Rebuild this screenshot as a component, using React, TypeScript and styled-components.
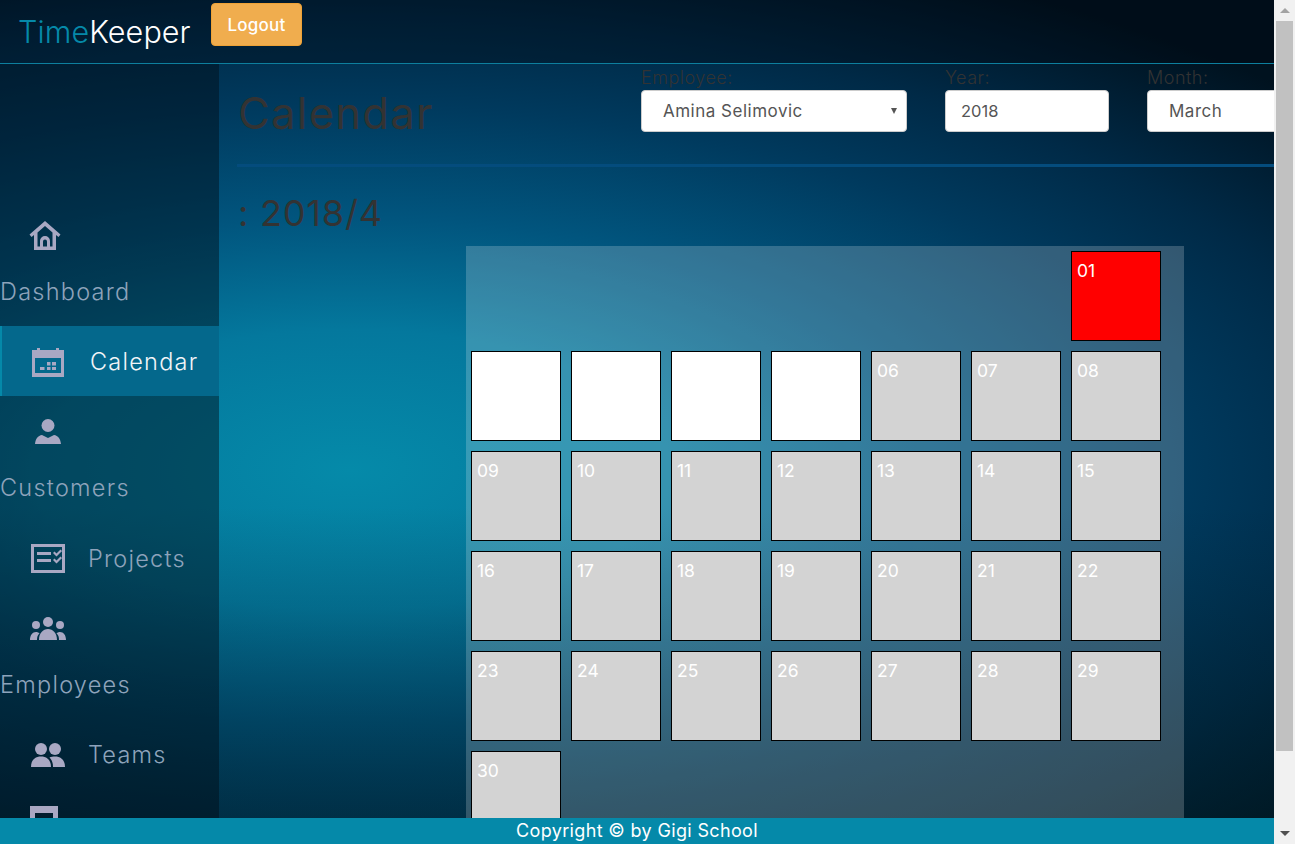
import React from 'react';
import styled, { createGlobalStyle } from 'styled-components';

const GlobalStyle = createGlobalStyle`
  html, body {
    height: 100%;
  }
  body {
    margin: 0;
    font-family: "Inter", "Open Sans", sans-serif;
    overflow: hidden;
  }
  * {
    box-sizing: border-box;
  }
`;

const Shell = styled.div`
  display: flex;
  height: 100vh;
`;

const Page = styled.div`
  flex: 1;
  min-width: 0;
  display: flex;
  flex-direction: column;
  background-color: #00121f;
  background-image: linear-gradient(to bottom, transparent 60%, rgba(0, 28, 34, 0.48) 100%),
    radial-gradient(ellipse 1280px 560px at 350px 470px, #058aa9 0%, #04789d 25%, #01557e 45%, #003a5e 65%, #002a47 80%, #00121f 100%);
`;

const Content = styled.div`
  flex: 1;
  min-height: 0;
  overflow: hidden;
`;

const ScrollRail = styled.aside`
  flex: 0 0 21px;
  display: flex;
  flex-direction: column;
  background: #f1f1f1;
`;

const RailArrow = styled.div<{ $down?: boolean }>`
  flex: 0 0 21px;
  display: flex;
  align-items: center;
  justify-content: center;
  &::before {
    content: '';
    border-left: 5px solid transparent;
    border-right: 5px solid transparent;
    ${(p) => (p.$down ? 'border-top: 5px solid #505050;' : 'border-bottom: 5px solid #a3a3a3;')}
  }
`;

const RailTrack = styled.div`
  flex: 1;
  padding: 0 2px;
`;

const RailThumb = styled.div`
  height: 730px;
  background: #c1c1c1;
`;

const Header = styled.header`
  display: flex;
  align-items: flex-start;
  height: 64px;
  padding: 3px 0 0 18px;
  border-bottom: 1px solid #0d7f9e;
  background: rgba(0, 5, 15, 0.35);
`;

const Logo = styled.div`
  margin-top: 10px;
  width: 193px;
  font-size: 30.5px;
  font-weight: 300;
  line-height: 38px;
  letter-spacing: 0.1px;
  color: #fff;
  span {
    color: #0589a9;
  }
`;

const LogoutButton = styled.button`
  width: 91px;
  height: 43px;
  border: 1px solid #eea236;
  border-radius: 4px;
  background: #f0ad4e;
  color: #fff;
  font-family: inherit;
  font-size: 17px;
  font-weight: 500;
  letter-spacing: 0.2px;
`;

const Body = styled.div`
  display: flex;
  align-items: stretch;
`;

const Sidebar = styled.nav`
  flex: 0 0 219px;
  padding-top: 136px;
  background: rgba(0, 10, 20, 0.45);
`;

const NavItem = styled.a<{ $stacked?: boolean; $active?: boolean }>`
  display: flex;
  flex-direction: ${(p) => (p.$stacked ? 'column' : 'row')};
  align-items: ${(p) => (p.$stacked ? 'flex-start' : 'center')};
  height: ${(p) => (p.$stacked ? 126.4 : 70)}px;
  padding-top: ${(p) => (p.$stacked ? 20 : 2)}px;
  color: ${(p) => (p.$active ? '#f2f5f8' : '#8ea3bb')};
  font-size: 23.5px;
  font-weight: 300;
  letter-spacing: 1.25px;
  ${(p) =>
    p.$active &&
    `
    box-shadow: inset 2px 0 0 #0589a9;
    background: #04688c;
  `}
`;

const IconSlot = styled.span`
  display: flex;
  justify-content: center;
  align-items: center;
  flex: none;
  width: 96px;
  height: 32px;
  svg {
    fill: #a9a8c3;
    display: block;
  }
`;

const NavLabel = styled.span<{ $stacked?: boolean; $active?: boolean; $drop?: number }>`
  line-height: 30px;
  margin-top: ${(p) => (p.$stacked ? 25 : p.$drop ?? 0)}px;
  margin-left: ${(p) => (p.$stacked ? 0 : p.$active ? -6 : -8)}px;
`;

const Main = styled.main`
  flex: 1;
  min-width: 0;
  padding-left: 18px;
`;

const TopRow = styled.div`
  display: flex;
  height: 103px;
  border-bottom: 3px solid #044c7d;
`;

const Title = styled.h1`
  flex: 0 0 404px;
  margin: 24px 0 0;
  padding-left: 1px;
  font-size: 43.5px;
  font-weight: 400;
  line-height: 50px;
  letter-spacing: 1.3px;
  color: #333;
`;

const Field = styled.div<{ $width: number }>`
  flex: 0 0 ${(p) => p.$width}px;
  padding-top: 4px;
  margin-right: 38px;
  label {
    display: block;
    height: 22px;
    font-size: 18px;
    font-weight: 300;
    line-height: 20px;
    letter-spacing: 0.5px;
    color: #333;
  }
`;

const SelectWrap = styled.div`
  position: relative;
  &::after {
    content: '';
    position: absolute;
    top: 18px;
    right: 10px;
    border: 3.5px solid transparent;
    border-top: 6px solid #555;
    border-bottom: 0;
  }
`;

const Select = styled.select`
  display: block;
  width: 100%;
  height: 42px;
  padding: 0 21px;
  appearance: none;
  border: 1px solid #ccc;
  border-radius: 4px;
  background: #fff;
  color: #555;
  font-family: inherit;
  font-size: 17px;
  letter-spacing: 0.5px;
`;

const Input = styled.input`
  display: block;
  width: 100%;
  height: 42px;
  padding: 0 15px;
  border: 1px solid #ccc;
  border-radius: 4px;
  background: #fff;
  color: #555;
  font-family: inherit;
  font-size: 16.5px;
`;

const Period = styled.h2`
  margin: 24px 0 0;
  padding-left: 1px;
  font-size: 36px;
  font-weight: 400;
  line-height: 44px;
  letter-spacing: 0.8px;
  color: #333;
`;

const CalendarPanel = styled.section`
  display: grid;
  grid-template-columns: repeat(7, 90px);
  gap: 10px;
  width: 718px;
  margin: 11px 0 80px 229px;
  padding: 5px 18px 5px 5px;
  background: rgba(255, 255, 255, 0.2);
`;

const Day = styled.div<{ $tone: 'red' | 'white' | 'grey' }>`
  height: 90px;
  padding: 9px 5px;
  border: 1px solid #000;
  background: ${(p) => ({ red: '#f00', white: '#fff', grey: '#d3d3d3' }[p.$tone])};
  color: #fff;
  font-size: 17.5px;
  line-height: 20px;
`;

const Footer = styled.footer`
  flex: 0 0 26px;
  background: #0589a9;
  color: #fff;
  font-size: 18px;
  letter-spacing: 0.35px;
  line-height: 26px;
  text-align: center;
`;

const HomeSvg = styled.svg`
  margin-right: 7px;
`;

const InvoiceSvg = styled.svg`
  margin: -8px 8px 0 0;
`;

const HomeIcon = () => (
  <HomeSvg width="32" height="30" viewBox="0 0 32 30">
    <path
      fillRule="evenodd"
      d="M16 0 .5 13.500 2.500 16 5 14v15h22V14l2.500 2 2-2.500zM16 5l7.500 6.500V25.500H21V20a5 5 0 0 0-10 0v5.500H8.500V11.500zM14 25.500V20.500a2 2 0 0 1 4 0v5z"
    />
  </HomeSvg>
);

const CalendarIcon = () => (
  <svg width="32" height="29" viewBox="0 0 32 29">
    <path
      fillRule="evenodd"
      d="M5 0h3v2h16V0h3v2h5v27H0V2h5zM3 10v15h26V10zM15 14h3.500v3.500H15zM20 14h4v3.500h-4zM8 19h4.500v3H8zM15 19h3.500v3H15zM20 19h4v3h-4z"
    />
  </svg>
);

const CustomerIcon = () => (
  <svg width="26" height="26" viewBox="0 0 26 26">
    <circle cx="13" cy="6.500" r="6.500" />
    <path d="M7 16 13 19 19 16C23 16.500 25.500 20 26 25H0C.5 20 3 16.500 7 16z" />
  </svg>
);

const ProjectIcon = () => (
  <svg width="34" height="29" viewBox="0 0 34 29">
    <path
      fillRule="evenodd"
      d="M0 0h34v29H0zM3 3v23h28V3zM6 8h14v3H6zM6 15h14v3H6zM22 9l1.500-1.500 2 2L29.500 5.500 31 7l-5.500 5.500zM22 16l1.500-1.500 2 2 4-4L31 14l-5.500 5.500z"
    />
  </svg>
);

const EmployeesIcon = () => (
  <svg width="36" height="24" viewBox="0 0 36 24">
    <circle cx="18" cy="5" r="5" />
    <circle cx="6" cy="8" r="4" />
    <circle cx="30" cy="8" r="4" />
    <path d="M9 23c0-7 4-11 9-11s9 4 9 11zM0 23c0-5 2.500-8 6-8 1.500 0 2.500.5 3.500 1.500C7.500 18 7 20 7 23zM36 23c0-5-2.500-8-6-8-1.500 0-2.500.5-3.500 1.500C28.500 18 29 20 29 23z" />
  </svg>
);

const TeamsIcon = () => (
  <svg width="34" height="24" viewBox="0 0 34 24">
    <circle cx="10" cy="6" r="6" />
    <circle cx="24" cy="6" r="6" />
    <path d="M0 24c0-7 4-10.500 10-10.500S20 17 20 24zM22 24c0-4-1-7-3.500-9.500 1.500-.7 3.500-1 5.500-1 6 0 10 3.500 10 10.500z" />
  </svg>
);

const InvoiceIcon = () => (
  <InvoiceSvg width="28" height="30" viewBox="0 0 28 30">
    <path fillRule="evenodd" d="M0 0h28v30H0zM5 7v18h18V7z" />
  </InvoiceSvg>
);

const navItems = [
  { label: 'Dashboard', icon: <HomeIcon />, stacked: true },
  { label: 'Calendar', icon: <CalendarIcon />, active: true },
  { label: 'Customers', icon: <CustomerIcon />, stacked: true },
  { label: 'Projects', icon: <ProjectIcon /> },
  { label: 'Employees', icon: <EmployeesIcon />, stacked: true },
  { label: 'Teams', icon: <TeamsIcon /> },
  { label: 'Invoices', icon: <InvoiceIcon />, drop: 5 },
];

const pad = (n: number) => String(n).padStart(2, '0');

const App = () => {
  return (
    <Shell>
      <GlobalStyle />
      <Page>
        <Content>
          <Header>
            <Logo>
              <span>Time</span>Keeper
            </Logo>
            <LogoutButton>Logout</LogoutButton>
          </Header>
          <Body>
            <Sidebar>
              {navItems.map((item) => (
                <NavItem key={item.label} $stacked={item.stacked} $active={item.active}>
                  <IconSlot>{item.icon}</IconSlot>
                  <NavLabel $stacked={item.stacked} $active={item.active} $drop={item.drop}>
                    {item.label}
                  </NavLabel>
                </NavItem>
              ))}
            </Sidebar>
            <Main>
              <TopRow>
                <Title>Calendar</Title>
                <Field $width={266}>
                  <label>Employee:</label>
                  <SelectWrap>
                    <Select defaultValue="Amina Selimovic">
                      <option>Amina Selimovic</option>
                    </Select>
                  </SelectWrap>
                </Field>
                <Field $width={164}>
                  <label>Year:</label>
                  <Input defaultValue="2018" />
                </Field>
                <Field $width={164}>
                  <label>Month:</label>
                  <SelectWrap>
                    <Select defaultValue="March">
                      <option>March</option>
                    </Select>
                  </SelectWrap>
                </Field>
              </TopRow>
              <Period>: 2018/4</Period>
              <CalendarPanel>
                {Array.from({ length: 6 }).map((_, i) => (
                  <div key={i} />
                ))}
                {Array.from({ length: 30 }).map((_, i) => (
                  <Day key={i} $tone={i === 0 ? 'red' : i < 5 ? 'white' : 'grey'}>
                    {pad(i + 1)}
                  </Day>
                ))}
              </CalendarPanel>
            </Main>
          </Body>
        </Content>
        <Footer>Copyright © by Gigi School</Footer>
      </Page>
      <ScrollRail>
        <RailArrow />
        <RailTrack>
          <RailThumb />
        </RailTrack>
        <RailArrow $down />
      </ScrollRail>
    </Shell>
  );
};

export default App;
